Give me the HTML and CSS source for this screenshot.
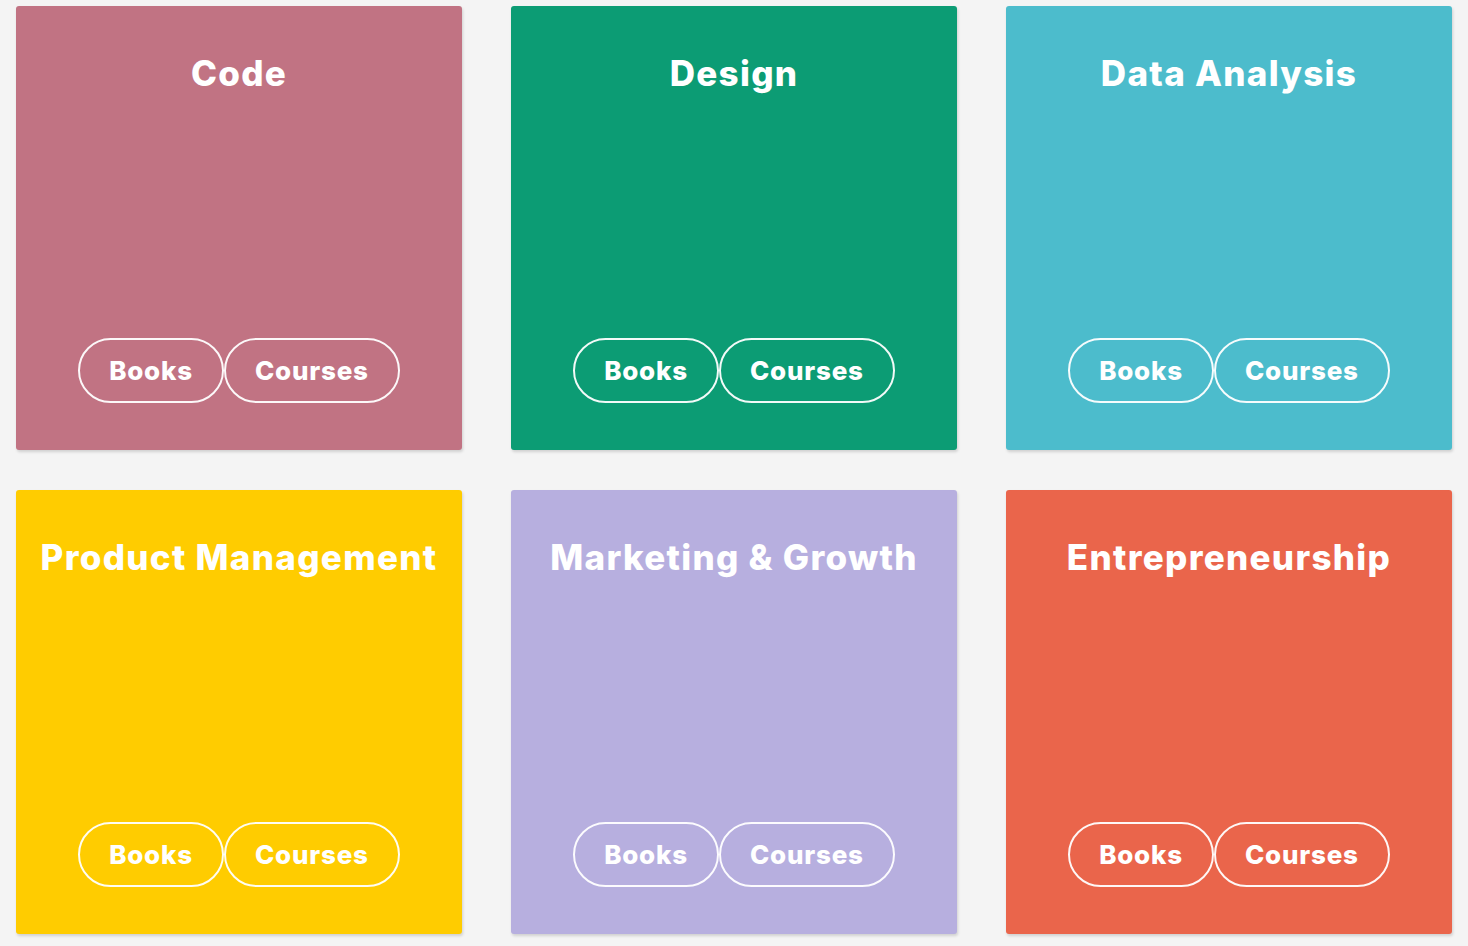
FILE: index.html
```html
<!DOCTYPE html>
<html lang="en">
    <head>
        <meta charset="UTF-8" />
        <meta name="viewport" content="width=device-width, initial-scale=1.0" />
        <title>topics</title>
        <link rel="stylesheet" href="styles.css">
    </head>
    <body>
        <!--주제 카드 목록-->
        <ul class="topics">
            <li class="card c-code">
                <h2>Code</h2>
                <div class="links">
                    <a href="#" class="pill">Books</a>
                    <a href="#" class="pill">Courses</a>
                </div>
            </li>
            <li class="card c-design">
                <h2>Design</h2>
                <div class="links">
                    <a href="#" class="pill">Books</a>
                    <a href="#" class="pill">Courses</a>
                </div>
            </li>
            <li class="card c-data">
                <h2>Data Analysis</h2>
                <div class="links">
                    <a href="#" class="pill">Books</a>
                    <a href="#" class="pill">Courses</a>
                </div>
            </li>
            <li class="card c-product">
                <h2>Product Management</h2>
                <div class="links">
                    <a href="#" class="pill">Books</a>
                    <a href="#" class="pill">Courses</a>
                </div>
            </li>
            <li class="card c-marketing">
                <h2>Marketing &amp; Growth</h2>
                <div class="links">
                    <a href="#" class="pill">Books</a>
                    <a href="#" class="pill">Courses</a>
                </div>
            </li>
            <li class="card c-entre">
                <h2>Entrepreneurship</h2>
                <div class="links">
                    <a href="#" class="pill">Books</a>
                    <a href="#" class="pill">Courses</a>
                </div>
            </li>
        </ul>
    </body>
</html>
```

FILE: styles.css
```css
html,
body {
    margin: 0px;
    padding: 0px;
    width: 100%;
    height: 100%;
}

body {
    background: #f4f4f4;
    font-family: "Inter", "Liberation Sans", sans-serif;
    color: #fff;
}

ul,
ol {
    /*3무*/
    margin: 0px;
    padding: 0px;
    list-style: none;
}

/* 카드 그리드 */
.topics {
    display: grid;
    grid-template-columns: repeat(3, 446px);
    column-gap: 49px;
    row-gap: 40px;
    padding: 6px 0 0 16px;
}

.card {
    display: flex;
    flex-direction: column;
    align-items: center;
    justify-content: space-between;
    height: 444px;
    border-radius: 3px;
    box-shadow: 1px 2px 3px rgba(0, 0, 0, 0.15);
    box-sizing: border-box;
    padding: 44px 0 47px;
}

.card h2 {
    margin: 0;
    font-size: 35px;
    font-weight: 800;
    line-height: 46px;
    letter-spacing: 1.3px;
}

/* 버튼 묶음 */
.links {
    display: flex;
}

.pill {
    display: block;
    height: 65px;
    box-sizing: border-box;
    padding: 0 29px;
    border: 2px solid rgba(255, 255, 255, 0.95);
    border-radius: 33px;
    color: #fff;
    text-decoration: none;
    font-size: 26px;
    font-weight: 800;
    line-height: 62px;
    letter-spacing: 0.8px;
}

/* 카드 색상 */
.c-code { background: #c17383; }
.c-design { background: #0c9c74; }
.c-data { background: #4cbccc; }
.c-product { background: #ffcc00; }
.c-marketing { background: #b7afdf; }
.c-entre { background: #ea654b; }
```
